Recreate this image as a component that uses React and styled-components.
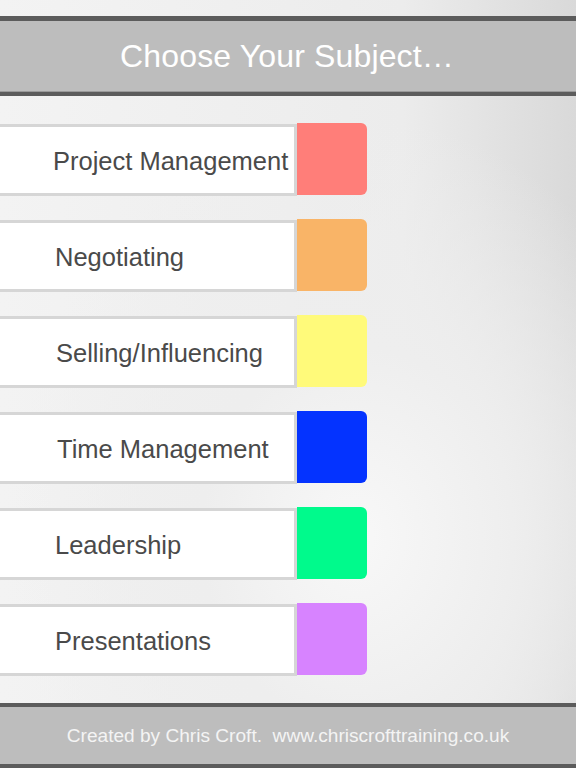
import React from "react";
import styled, { createGlobalStyle } from "styled-components";

const Global = createGlobalStyle`
  html, body { margin: 0; padding: 0; }
  body {
    font-family: "Liberation Sans", Arial, Helvetica, sans-serif;
    background: #ececec;
  }
`;

const Page = styled.div`
  width: 576px;
  height: 768px;
  display: flex;
  flex-direction: column;
  overflow: hidden;
  background:
    radial-gradient(ellipse 60% 55% at 62% 70%, #f8f8f8 0%, #eeeeee 45%, rgba(224,224,224,0) 100%),
    linear-gradient(90deg, #f3f3f3 0%, #ececec 70%, #d9d9d9 100%);
`;

const TopGap = styled.div`
  height: 16px;
  flex: none;
`;

const Header = styled.header`
  flex: none;
  height: 70px;
  background: #bdbdbd;
  border-top: 5px solid #5c5c5c;
  border-bottom: 4px solid #5c5c5c;
  box-shadow: inset 0 -1px 0 #9a9a9a;
  display: flex;
  align-items: center;
  justify-content: center;
  box-sizing: content-box;
  padding-bottom: 1px;
`;

const Title = styled.h1`
  margin: 0;
  font-weight: 400;
  font-size: 32px;
  color: #ffffff;
  letter-spacing: 0.15px;
  transform: translateX(-1px);
`;

const List = styled.main`
  flex: 1;
  display: flex;
  flex-direction: column;
  gap: 24px;
  padding-top: 28px;
`;

const Row = styled.button`
  all: unset;
  cursor: pointer;
  display: flex;
  height: 72px;
  width: 367px;
`;

const Label = styled.div`
  box-sizing: border-box;
  width: 297px;
  height: 72px;
  background: #ffffff;
  border: 3px solid #d6d6d6;
  border-left: none;
  display: flex;
  align-items: center;
  padding-left: ${(p) => p.$indent}px;
  padding-top: 2px;
  font-size: 25.5px;
  color: #4a4a4a;
  white-space: nowrap;
`;

const Swatch = styled.div`
  width: 70px;
  height: 72px;
  background: ${(p) => p.$color};
  border-radius: 0 6px 6px 0;
  margin-top: -1px;
`;

const Footer = styled.footer`
  flex: none;
  height: 57px;
  background: #bdbdbd;
  border-top: 4px solid #5c5c5c;
  border-bottom: 4px solid #5c5c5c;
  display: flex;
  align-items: center;
  justify-content: center;
  font-size: 19.1px;
  color: #f4f4f4;
  white-space: pre;
`;

const subjects = [
  { name: "Project Management", color: "#ff7e79", indent: 53 },
  { name: "Negotiating", color: "#f9b467", indent: 55 },
  { name: "Selling/Influencing", color: "#fffa7a", indent: 56 },
  { name: "Time Management", color: "#0433ff", indent: 57 },
  { name: "Leadership", color: "#00fa8c", indent: 55 },
  { name: "Presentations", color: "#d783ff", indent: 55 },
];

export default function App() {
  return (
    <>
      <Global />
      <Page>
        <TopGap />
        <Header>
          <Title>Choose Your Subject…</Title>
        </Header>
        <List>
          {subjects.map((s) => (
            <Row key={s.name}>
              <Label $indent={s.indent}>{s.name}</Label>
              <Swatch $color={s.color} />
            </Row>
          ))}
        </List>
        <Footer>Created by Chris Croft.  www.chriscrofttraining.co.uk</Footer>
      </Page>
    </>
  );
}
